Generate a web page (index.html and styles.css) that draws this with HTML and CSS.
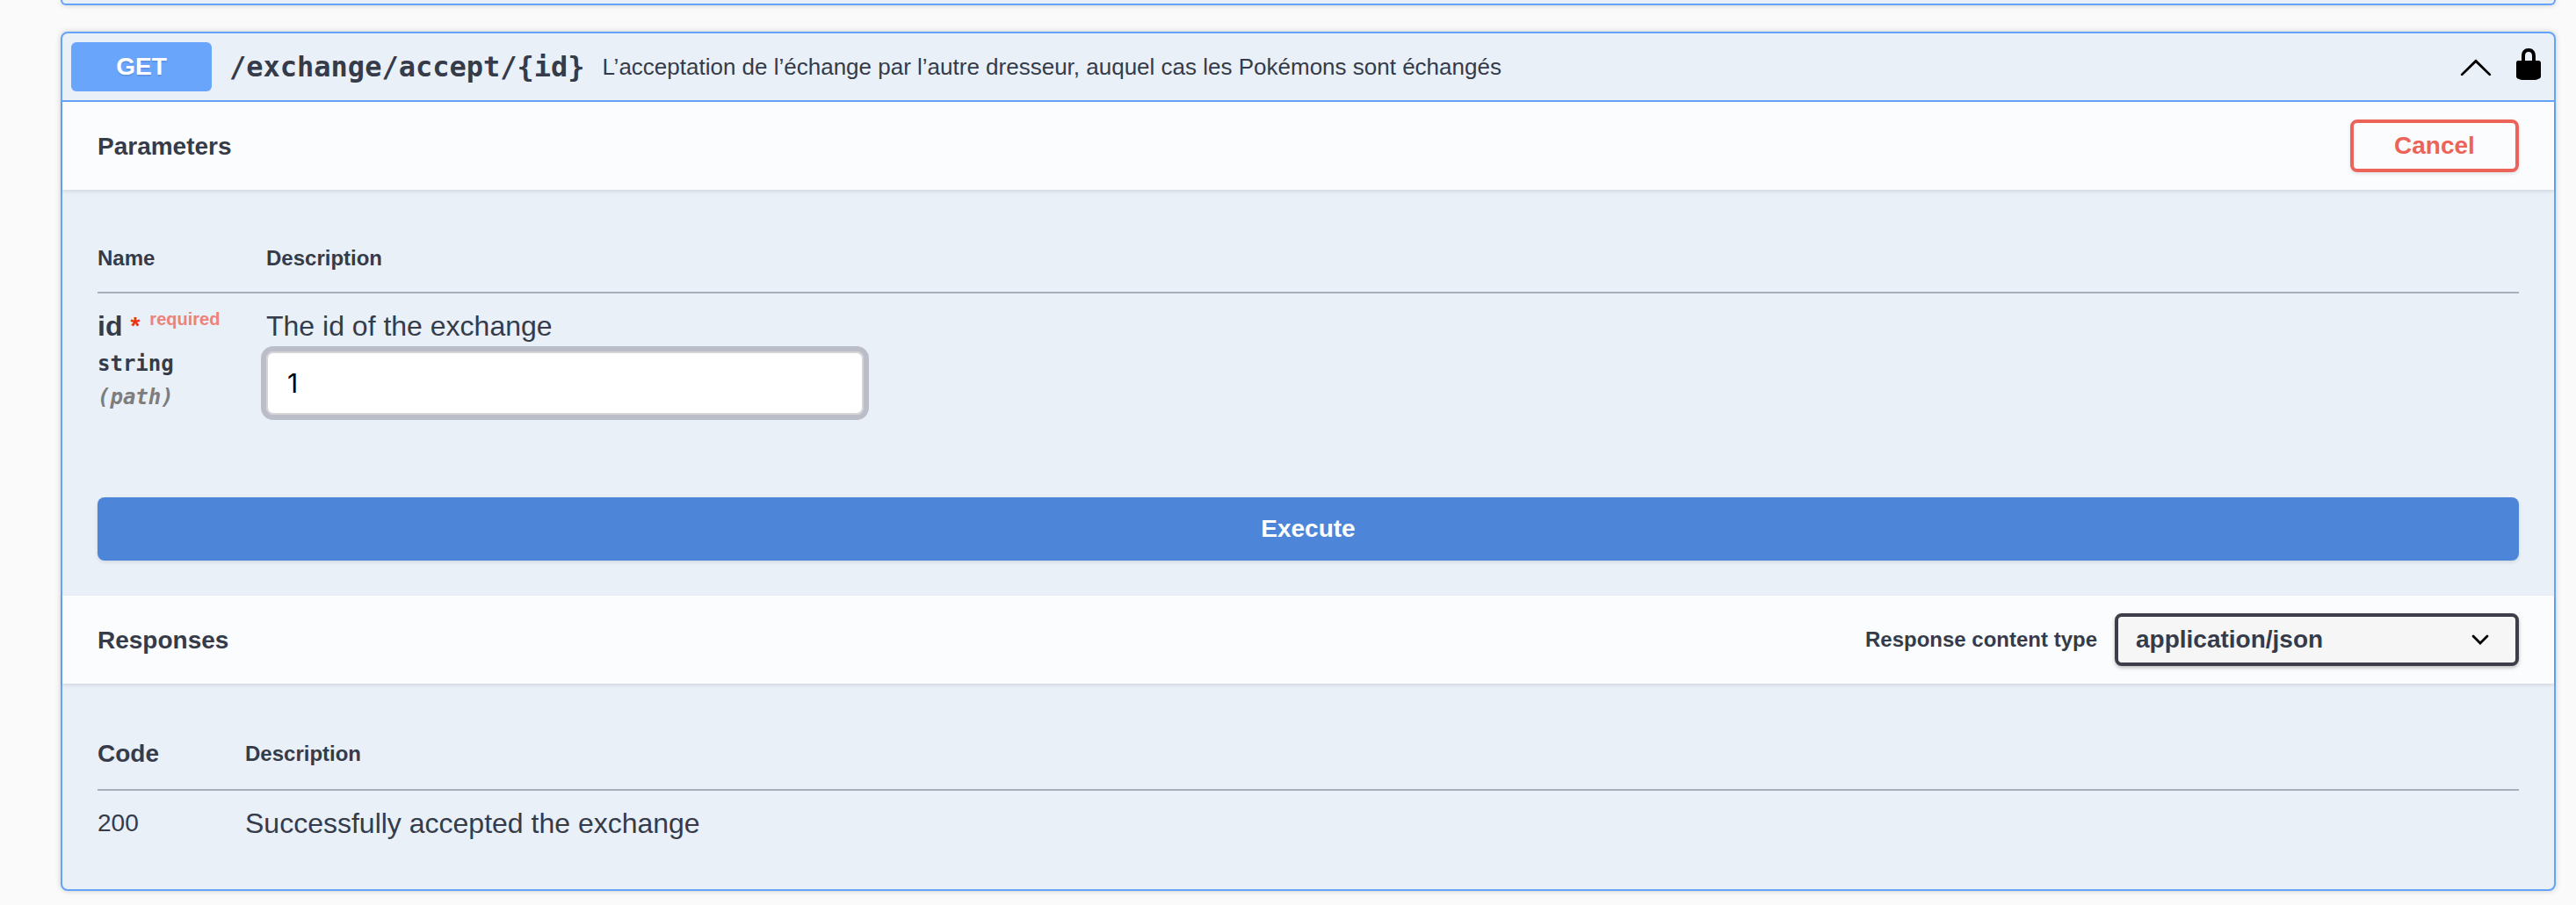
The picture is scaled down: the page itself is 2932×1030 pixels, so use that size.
FILE: index.html
```html
<!DOCTYPE html>
<html lang="fr">
<head>
<meta charset="utf-8">
<title>API</title>
<link rel="stylesheet" href="styles.css">
</head>
<body>
<main class="operations">
  <section class="opblock opblock-previous"></section>
  <section class="opblock">
    <header class="summary">
      <span class="method">GET</span>
      <span class="path">/exchange/accept/{id}</span>
      <span class="summary-text">L’acceptation de l’échange par l’autre dresseur, auquel cas les Pokémons sont échangés</span>
      <svg class="icon arrow" viewBox="0 0 20 20"><path d="M17.418 14.908c.272.268.709.268.979 0s.271-.701 0-.969l-7.908-7.83c-.27-.268-.707-.268-.979 0l-7.908 7.83c-.27.268-.27.701 0 .969.271.268.709.268.979 0L10 7.767l7.418 7.141z"/></svg>
      <svg class="icon lock" viewBox="0 0 20 20"><path d="M15.8 8H14V5.6C14 2.703 12.665 1 10 1 7.334 1 6 2.703 6 5.6V8H4c-.553 0-1 .646-1 1.199V17c0 .549.428 1.139.951 1.307l1.197.387C5.672 18.861 6.55 19 7.1 19h5.8c.549 0 1.428-.139 1.951-.307l1.196-.387c.524-.167.953-.757.953-1.306V9.199C17 8.646 16.352 8 15.8 8zM12 8H8V5.199C8 3.754 8.797 3 10 3c1.203 0 2 .754 2 2.199V8z"/></svg>
    </header>
    <div class="section-header">
      <h4 class="section-title">Parameters</h4>
      <button class="btn cancel">Cancel</button>
    </div>
    <div class="parameters">
      <div class="row head params-grid"><span class="col-label">Name</span><span class="col-label">Description</span></div>
      <div class="row params-grid">
        <div class="param">
          <div class="param-name">id<span class="star">*</span><span class="required">required</span></div>
          <div class="param-type">string</div>
          <div class="param-in">(path)</div>
        </div>
        <div class="param-desc">
          <div class="text">The id of the exchange</div>
          <input class="param-input" type="text" value="1">
        </div>
      </div>
    </div>
    <div class="execute-wrapper"><button class="btn execute">Execute</button></div>
    <div class="section-header">
      <h4 class="section-title">Responses</h4>
      <div class="content-type">
        <span class="col-label">Response content type</span>
        <div class="select"><span>application/json</span>
          <svg class="select-arrow" viewBox="0 0 20 12"><path d="M2 2l8 8 8-8"/></svg>
        </div>
      </div>
    </div>
    <div class="responses">
      <div class="row head responses-grid"><span class="code-label">Code</span><span class="col-label">Description</span></div>
      <div class="row responses-grid"><span class="code">200</span><span class="text">Successfully accepted the exchange</span></div>
    </div>
  </section>
</main>
</body>
</html>
```
FILE: styles.css
```css
* { box-sizing: border-box; }
body {
  margin: 0;
  height: 1030px;
  overflow: hidden;
  background: #fafafa;
  color: #3b4151;
  color: #353b49;
  font-family: "Liberation Sans", Arial, sans-serif;
}
.operations {
  display: flex;
  flex-direction: column;
  gap: 30px;
  padding: 0 23px 0 69px;
}
.opblock {
  height: 978px;
  border: 2px solid #64a3f8;
  border-radius: 8px;
  background: #e9f0f8;
  box-shadow: 0 0 6px rgba(0, 0, 0, .19);
}
.opblock-previous {
  height: 6px;
  border-top: 0;
  border-radius: 0 0 8px 8px;
}
.summary {
  display: flex;
  align-items: center;
  height: 78px;
  padding: 0 9px 0 10px;
  border-bottom: 2px solid #64a3f8;
}
.method {
  width: 160px;
  height: 56px;
  border-radius: 6px;
  background: #69a5fa;
  color: #fff;
  font-size: 28px;
  font-weight: 700;
  line-height: 56px;
  text-align: center;
  text-shadow: 0 2px 0 rgba(0, 0, 0, .1);
}
.path {
  margin-left: 20px;
  font: 700 32px/40px "DejaVu Sans Mono", monospace;
}
.summary-text {
  flex: 1;
  margin-left: 20px;
  font-size: 26px;
  line-height: 40px;
}
.icon { width: 40px; height: 40px; }
.arrow { margin-right: 20px; }
.lock { margin-bottom: 6px; }
.section-header {
  position: relative;
  display: flex;
  align-items: center;
  justify-content: space-between;
  height: 100px;
  padding: 0 40px;
  background: #fbfcfe;
  box-shadow: 0 2px 4px rgba(0, 0, 0, .1);
}
.section-title {
  margin: 0;
  padding-top: 1px;
  font-size: 28px;
  line-height: 40px;
}
.btn {
  font: 700 28px/40px "Liberation Sans", Arial, sans-serif;
  text-align: center;
  border-radius: 8px;
  box-shadow: 0 2px 4px rgba(0, 0, 0, .1);
}
.cancel {
  width: 192px;
  height: 60px;
  padding: 0;
  border: 4px solid #ec6359;
  background: transparent;
  color: #ec6359;
}
.parameters { height: 350px; padding: 40px 40px 0; }
.params-grid { display: grid; grid-template-columns: 192px 1fr; }
.responses-grid { display: grid; grid-template-columns: 168px 1fr; }
.head {
  height: 78px;
  align-items: center;
  border-bottom: 2px solid #a7afba;
}
.col-label { font-size: 24px; font-weight: 700; line-height: 36px; }
.param { padding-top: 19px; }
.param-name {
  display: flex;
  height: 42px;
  font-size: 32px;
  font-weight: 700;
  line-height: 36px;
}
.star {
  margin: 0 0 0 9px;
  color: #ea3313;
  font-size: 28px;
}
.required {
  margin: -8px 0 0 11px;
  color: #ed8279;
  font-size: 20px;
}
.param-type, .param-in {
  font: 700 24px/38px "DejaVu Sans Mono", monospace;
}
.param-in { color: #7d7d7d; font-style: italic; }
.param-desc { padding-top: 19px; }
.text { font-size: 32px; line-height: 36px; }
.param-input {
  display: block;
  width: 680px;
  height: 72px;
  margin-top: 11px;
  padding: 0 22px;
  border: 2px solid #d5d5d5;
  border-radius: 8px;
  outline: 6px solid #bbbec8;
  background: #fff;
  color: #000;
  font: 30px "Inter", sans-serif;
}
.execute-wrapper { height: 112px; padding: 0 40px; }
.execute {
  display: block;
  width: 100%;
  height: 72px;
  border: 0;
  background: #4d86d9;
  color: #fff;
}
.content-type { display: flex; align-items: center; gap: 20px; }
.select {
  display: flex;
  align-items: center;
  justify-content: space-between;
  width: 460px;
  height: 60px;
  padding: 0 30px 0 20px;
  border: 4px solid #3d3e49;
  border-radius: 8px;
  background: #f6f6f6;
  box-shadow: 0 2px 4px rgba(0, 0, 0, .25);
  font-size: 28px;
  font-weight: 700;
}
.select-arrow { width: 20px; height: 12px; fill: none; stroke: #000; stroke-width: 2.8; stroke-linecap: round; overflow: visible; }
.responses { padding: 40px 40px 0; }
.responses .head { height: 82px; }
.code-label { font-size: 28px; font-weight: 700; }
.code { font-size: 28px; line-height: 36px; }
.responses .row:last-child { padding-top: 19px; }
```
